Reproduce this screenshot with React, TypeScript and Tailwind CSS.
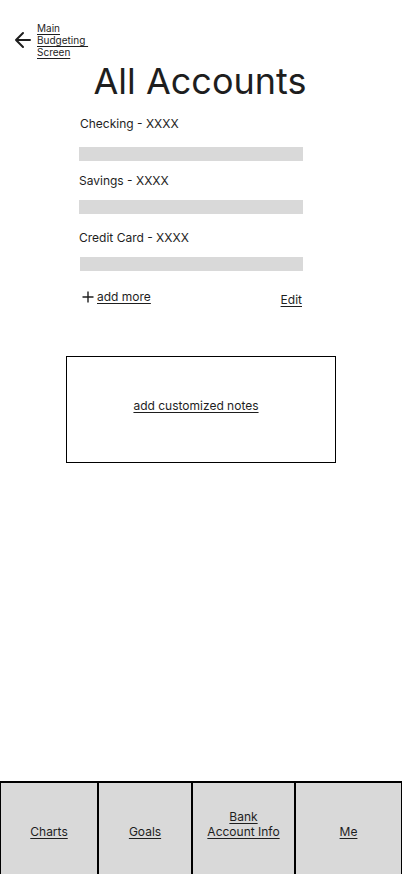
import React from "react";

export default function App() {
  return (
    <div
      className="w-[402px] h-[874px] bg-white flex flex-col text-[#1e1e1e] overflow-hidden"
      style={{ fontFamily: "Inter, 'Noto Sans', sans-serif" }}
    >
      <div className="flex items-center pl-[14px] pt-[22px] gap-[5px]">
        <svg width="18" height="18" viewBox="0 0 18 18" fill="none" stroke="#1e1e1e" strokeWidth="2" strokeLinecap="round" strokeLinejoin="round">
          <path d="M16 9H2M9 2L2 9l7 7" />
        </svg>
        <div className="flex flex-col text-[10px] leading-[12px] items-start">
          <span className="underline underline-offset-2">Main</span>
          <span className="underline underline-offset-2">Budgeting&nbsp;</span>
          <span className="underline underline-offset-2">Screen</span>
        </div>
      </div>
      <h1 className="text-[36px] leading-[40px] text-center ml-[-2px] mt-[3px]">All Accounts</h1>
      <div className="flex flex-col pl-[79px] pr-[99px] mt-[15px] text-[12px] leading-[16px]">
        <div className="pl-[1px]">Checking - XXXX</div>
        <div className="h-[14px] bg-[#d9d9d9] mt-[15px]" />
        <div className="mt-[12px]">Savings - XXXX</div>
        <div className="h-[14px] bg-[#d9d9d9] mt-[11px]" />
        <div className="mt-[16px]">Credit Card - XXXX</div>
        <div className="h-[14px] bg-[#d9d9d9] mt-[11px] ml-[1px]" />
        <div className="flex justify-between items-end mt-[18px] pl-[3px] pr-[1px]">
          <div className="flex items-center gap-[3px]">
            <svg width="12" height="12" viewBox="0 0 12 12" stroke="#1e1e1e" strokeWidth="1.4">
              <path d="M6 0.5v11M0.5 6h11" />
            </svg>
            <span className="text-[12px] underline underline-offset-2">add more</span>
          </div>
          <span className="text-[12px] underline underline-offset-2 mb-[-3px]">Edit</span>
        </div>
      </div>
      <div className="ml-[66px] mt-[51px] w-[270px] h-[107px] border border-black flex items-center justify-center pb-[7px]">
        <span className="text-[12px] underline underline-offset-2 mr-[10px]">add customized notes</span>
      </div>
      <div className="mt-auto h-[93px] flex border-t-2 border-black bg-[#d9d9d9] text-[12px] leading-[15px]">
        <div className="w-[97px] border-l border-black flex items-center justify-center pt-[6px]">
          <span className="underline underline-offset-2">Charts</span>
        </div>
        <div className="w-[94px] border-l-2 border-black flex items-center justify-center pt-[6px]">
          <span className="underline underline-offset-2">Goals</span>
        </div>
        <div className="w-[103px] border-l-2 border-black flex flex-col items-center justify-center pb-[10px]">
          <span className="underline underline-offset-2">Bank</span>
          <span className="underline underline-offset-2">Account Info</span>
        </div>
        <div className="flex-1 border-l-2 border-r border-black flex items-center justify-center pt-[6px]">
          <span className="underline underline-offset-2">Me</span>
        </div>
      </div>
    </div>
  );
}
